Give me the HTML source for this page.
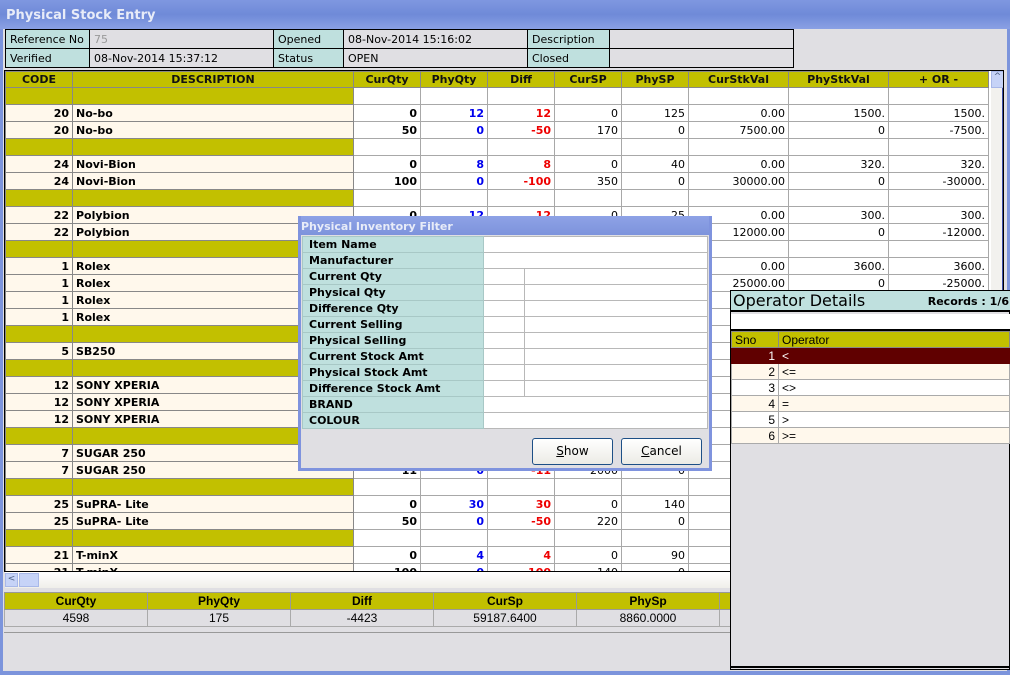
<!DOCTYPE html>
<html><head><meta charset="utf-8"><style>
*{box-sizing:border-box;margin:0;padding:0}
body{width:1010px;height:675px;overflow:hidden;background:#e0dfe3;font-family:"DejaVu Sans","Liberation Sans",sans-serif;font-size:11px;position:relative}
.abs{position:absolute}
#title{left:0;top:0;width:1010px;height:29px;background:linear-gradient(#7f97e0,#6f8ad8 50%,#8aa0e4);color:#e8ecf8;font-weight:bold;font-size:13px;padding:8px 0 0 6px}
#frameL{left:0;top:29px;width:3px;height:646px;background:#7c94dc}
#frameR{right:0;top:29px;width:3px;height:646px;background:#7c94dc}
#frameB{left:0;bottom:0;width:1010px;height:4px;background:#7c94dc}
table{border-collapse:collapse;table-layout:fixed}
#info{left:5px;top:29px;width:788px;border:1px solid #000}
#info td{height:19px;border:1px solid #000;padding:0 4px;font-size:11px;background:#e0dfe3;white-space:nowrap;overflow:hidden}
#info td.l{background:#bfe0de}
#grid{left:4px;top:70px;width:1000px;height:502px;border:1px solid #000;background:#fff;overflow:hidden}
#g{width:983px}
#g td{height:17px;border:1px solid #a8a8a8;padding:0 3px;text-align:right;white-space:nowrap;overflow:hidden;font-size:11px}
#g th{height:16px;border:1px solid #888;background:#c2c000;font-weight:bold;font-size:11px;color:#111}
#g tr.gp td.y{background:#c2c000;border-color:#888}
#g td.c,#g td.d{background:#fff8ec;font-weight:bold;border-color:#888}
#g td.d{text-align:left}
#g td.b{font-weight:bold}
.bl{color:#0000ee}.rd{color:#ee0000}
#vs{left:986px;top:0px;width:13px;height:500px;background:#f2f1ee}
#hs{left:5px;top:572px;width:726px;height:16px;background:linear-gradient(#fff,#f0efea)}
#tot{left:4px;top:592px;width:740px;border:1px solid #000}
#tot td{height:17px;border:1px solid #aaa;text-align:center;font-family:"Liberation Sans Narrow","Liberation Sans",sans-serif;font-size:12px}
#tot tr.h td{background:#c2c000;font-weight:bold;border-color:#999}
#stat{left:4px;top:632px;width:730px;height:36px;border-top:1px solid #999;background:#e0dfe3}
#dlg{left:298px;top:216px;width:414px;height:255px;background:#e0dfe3;border:3px solid #7f93de;border-top:0}
#dt{left:0;top:0;width:408px;height:19px;background:linear-gradient(#8ea2e6,#7d93dc);color:#e8ecf8;font-weight:bold;font-size:11px;padding:4px 0 0 0}
#ft{left:1px;top:20px;width:406px;border:1px solid #000}
#ft td{height:16px;border:1px solid #b8b8b8;background:#fff;font-weight:bold;font-size:11px}
#ft td.l{background:#bfe0de;padding-left:6px;border-color:#a8c8c6}
.btn{top:222px;width:81px;height:27px;border:1px solid #1d4f86;border-radius:3px;background:linear-gradient(#fff,#ecebe5);text-align:center;line-height:25px;font-size:12px}
#op{left:730px;top:290px;width:280px;height:380px;background:#e0dfe3;border:1px solid #000}
#opt{left:0;top:0;width:280px;height:21px;background:#bfe0de;border-bottom:2px solid #000}
#opw{left:0;top:23px;width:280px;height:17px;background:#fff;border-bottom:2px solid #000}
#ot{left:0;top:40px;width:278px}
#ot td{height:16px;border:1px solid #aaa;font-family:"Liberation Sans Narrow","Liberation Sans",sans-serif;font-size:12px;padding:0 3px}
#ot tr.h td{background:#c2c000;border-color:#888}
#ot td.n{text-align:right}
</style></head><body>
<div id="title" class="abs">Physical Stock Entry</div>
<div id="frameL" class="abs"></div><div id="frameR" class="abs"></div>
<table id="info" class="abs">
<colgroup><col style="width:84px"><col style="width:184px"><col style="width:70px"><col style="width:184px"><col style="width:82px"><col style="width:184px"></colgroup>
<tr><td class="l">Reference No</td><td style="color:#999">75</td><td class="l">Opened</td><td>08-Nov-2014 15:16:02</td><td class="l">Description</td><td></td></tr>
<tr><td class="l">Verified</td><td>08-Nov-2014 15:37:12</td><td class="l">Status</td><td>OPEN</td><td class="l">Closed</td><td></td></tr>
</table>
<div id="grid" class="abs">
<table id="g">
<colgroup><col style="width:67px"><col style="width:281px"><col style="width:67px"><col style="width:67px"><col style="width:67px"><col style="width:67px"><col style="width:67px"><col style="width:100px"><col style="width:100px"><col style="width:100px"></colgroup>
<tr><th>CODE</th><th>DESCRIPTION</th><th>CurQty</th><th>PhyQty</th><th>Diff</th><th>CurSP</th><th>PhySP</th><th>CurStkVal</th><th>PhyStkVal</th><th>+ OR -</th></tr>
<tr class="gp"><td class="y"></td><td class="y"></td><td></td><td></td><td></td><td></td><td></td><td></td><td></td><td></td></tr>
<tr><td class="c">20</td><td class="d">No-bo</td><td class="b">0</td><td class="b bl">12</td><td class="b rd">12</td><td>0</td><td>125</td><td>0.00</td><td>1500.</td><td>1500.</td></tr>
<tr><td class="c">20</td><td class="d">No-bo</td><td class="b">50</td><td class="b bl">0</td><td class="b rd">-50</td><td>170</td><td>0</td><td>7500.00</td><td>0</td><td>-7500.</td></tr>
<tr class="gp"><td class="y"></td><td class="y"></td><td></td><td></td><td></td><td></td><td></td><td></td><td></td><td></td></tr>
<tr><td class="c">24</td><td class="d">Novi-Bion</td><td class="b">0</td><td class="b bl">8</td><td class="b rd">8</td><td>0</td><td>40</td><td>0.00</td><td>320.</td><td>320.</td></tr>
<tr><td class="c">24</td><td class="d">Novi-Bion</td><td class="b">100</td><td class="b bl">0</td><td class="b rd">-100</td><td>350</td><td>0</td><td>30000.00</td><td>0</td><td>-30000.</td></tr>
<tr class="gp"><td class="y"></td><td class="y"></td><td></td><td></td><td></td><td></td><td></td><td></td><td></td><td></td></tr>
<tr><td class="c">22</td><td class="d">Polybion</td><td class="b">0</td><td class="b bl">12</td><td class="b rd">12</td><td>0</td><td>25</td><td>0.00</td><td>300.</td><td>300.</td></tr>
<tr><td class="c">22</td><td class="d">Polybion</td><td class="b">40</td><td class="b bl">0</td><td class="b rd">-40</td><td>300</td><td>0</td><td>12000.00</td><td>0</td><td>-12000.</td></tr>
<tr class="gp"><td class="y"></td><td class="y"></td><td></td><td></td><td></td><td></td><td></td><td></td><td></td><td></td></tr>
<tr><td class="c">1</td><td class="d">Rolex</td><td class="b">0</td><td class="b bl">6</td><td class="b rd">6</td><td>0</td><td>600</td><td>0.00</td><td>3600.</td><td>3600.</td></tr>
<tr><td class="c">1</td><td class="d">Rolex</td><td class="b">50</td><td class="b bl">0</td><td class="b rd">-50</td><td>500</td><td>0</td><td>25000.00</td><td>0</td><td>-25000.</td></tr>
<tr><td class="c">1</td><td class="d">Rolex</td><td class="b">20</td><td class="b bl">0</td><td class="b rd">-20</td><td>800</td><td>0</td><td>16000.00</td><td>0</td><td>-16000.</td></tr>
<tr><td class="c">1</td><td class="d">Rolex</td><td class="b">22</td><td class="b bl">0</td><td class="b rd">-22</td><td>700</td><td>0</td><td>15400.00</td><td>0</td><td>-15400.</td></tr>
<tr class="gp"><td class="y"></td><td class="y"></td><td></td><td></td><td></td><td></td><td></td><td></td><td></td><td></td></tr>
<tr><td class="c">5</td><td class="d">SB250</td><td class="b">0</td><td class="b bl">0</td><td class="b rd">0</td><td>0</td><td>0</td><td>0.00</td><td>0</td><td>0</td></tr>
<tr class="gp"><td class="y"></td><td class="y"></td><td></td><td></td><td></td><td></td><td></td><td></td><td></td><td></td></tr>
<tr><td class="c">12</td><td class="d">SONY XPERIA</td><td class="b">0</td><td class="b bl">0</td><td class="b rd">0</td><td>0</td><td>0</td><td>0.00</td><td>0</td><td>0</td></tr>
<tr><td class="c">12</td><td class="d">SONY XPERIA</td><td class="b">0</td><td class="b bl">0</td><td class="b rd">0</td><td>0</td><td>0</td><td>6000.00</td><td>0</td><td>-6000.</td></tr>
<tr><td class="c">12</td><td class="d">SONY XPERIA</td><td class="b">0</td><td class="b bl">0</td><td class="b rd">0</td><td>0</td><td>0</td><td>11800.00</td><td>0</td><td>-11800.</td></tr>
<tr class="gp"><td class="y"></td><td class="y"></td><td></td><td></td><td></td><td></td><td></td><td></td><td></td><td></td></tr>
<tr><td class="c">7</td><td class="d">SUGAR 250</td><td class="b">0</td><td class="b bl">0</td><td class="b rd">0</td><td>0</td><td>0</td><td>0.00</td><td>0</td><td>0</td></tr>
<tr><td class="c">7</td><td class="d">SUGAR 250</td><td class="b">11</td><td class="b bl">0</td><td class="b rd">-11</td><td>2000</td><td>0</td><td>22000.00</td><td>0</td><td>-22000.</td></tr>
<tr class="gp"><td class="y"></td><td class="y"></td><td></td><td></td><td></td><td></td><td></td><td></td><td></td><td></td></tr>
<tr><td class="c">25</td><td class="d">SuPRA- Lite</td><td class="b">0</td><td class="b bl">30</td><td class="b rd">30</td><td>0</td><td>140</td><td>0.00</td><td>4200.</td><td>4200.</td></tr>
<tr><td class="c">25</td><td class="d">SuPRA- Lite</td><td class="b">50</td><td class="b bl">0</td><td class="b rd">-50</td><td>220</td><td>0</td><td>11000.00</td><td>0</td><td>-11000.</td></tr>
<tr class="gp"><td class="y"></td><td class="y"></td><td></td><td></td><td></td><td></td><td></td><td></td><td></td><td></td></tr>
<tr><td class="c">21</td><td class="d">T-minX</td><td class="b">0</td><td class="b bl">4</td><td class="b rd">4</td><td>0</td><td>90</td><td>0.00</td><td>360.</td><td>360.</td></tr>
<tr><td class="c">21</td><td class="d">T-minX</td><td class="b">100</td><td class="b bl">0</td><td class="b rd">-100</td><td>140</td><td>0</td><td>14000.00</td><td>0</td><td>-14000.</td></tr>
</table>
<div id="vs" class="abs"><div class="abs" style="left:0;top:0;width:13px;height:17px;background:#c6d3f7;border:1px solid #a8b8e8;font-size:9px;text-align:center;color:#4d6185">&#94;</div><div class="abs" style="left:11px;top:17px;width:2px;height:483px;background:#3b4fa8"></div></div>
</div>
<div id="hs" class="abs"><div class="abs" style="left:0;top:1px;width:13px;height:14px;background:#c6d3f7;border:1px solid #a8b8e8;font-size:9px;color:#4d6185;text-align:center">&lt;</div><div class="abs" style="left:14px;top:1px;width:20px;height:14px;background:#c6d3f7;border:1px solid #a8b8e8"></div></div>
<table id="tot" class="abs">
<colgroup><col style="width:143px"><col style="width:143px"><col style="width:143px"><col style="width:143px"><col style="width:143px"><col style="width:25px"></colgroup>
<tr class="h"><td>CurQty</td><td>PhyQty</td><td>Diff</td><td>CurSp</td><td>PhySp</td><td></td></tr>
<tr><td>4598</td><td>175</td><td>-4423</td><td>59187.6400</td><td>8860.0000</td><td></td></tr>
</table>
<div id="stat" class="abs"></div>
<div id="frameB" class="abs"></div>
<div id="dlg" class="abs">
<div id="dt" class="abs">Physical Inventory Filter</div>
<table id="ft" class="abs">
<colgroup><col style="width:181px"><col style="width:40px"><col style="width:183px"></colgroup>
<tr><td class="l">Item Name</td><td colspan="2"></td></tr>
<tr><td class="l">Manufacturer</td><td colspan="2"></td></tr>
<tr><td class="l">Current Qty</td><td></td><td></td></tr>
<tr><td class="l">Physical Qty</td><td></td><td></td></tr>
<tr><td class="l">Difference Qty</td><td></td><td></td></tr>
<tr><td class="l">Current Selling</td><td></td><td></td></tr>
<tr><td class="l">Physical Selling</td><td></td><td></td></tr>
<tr><td class="l">Current Stock Amt</td><td></td><td></td></tr>
<tr><td class="l">Physical Stock Amt</td><td></td><td></td></tr>
<tr><td class="l">Difference Stock Amt</td><td></td><td></td></tr>
<tr><td class="l">BRAND</td><td colspan="2"></td></tr>
<tr><td class="l">COLOUR</td><td colspan="2"></td></tr>
</table>
<div class="abs btn" style="left:231px"><u>S</u>how</div>
<div class="abs btn" style="left:320px"><u>C</u>ancel</div>
</div>
<div id="op" class="abs">
<div id="opt" class="abs"><span class="abs" style="left:2px;top:0px;font-size:16px;font-family:'DejaVu Sans',sans-serif">Operator Details</span><span class="abs" style="right:2px;top:4px;font-weight:bold;font-size:11px">Records : 1/6</span></div>
<div id="opw" class="abs"></div>
<table id="ot" class="abs">
<colgroup><col style="width:47px"><col style="width:231px"></colgroup>
<tr class="h"><td>Sno</td><td>Operator</td></tr>
<tr style="background:#600000;color:#fff"><td class="n" style="border-color:#600000">1</td><td style="border-color:#600000">&lt;</td></tr>
<tr style="background:#fff8ec"><td class="n">2</td><td>&lt;=</td></tr>
<tr style="background:#fff"><td class="n">3</td><td>&lt;&gt;</td></tr>
<tr style="background:#fff8ec"><td class="n">4</td><td>=</td></tr>
<tr style="background:#fff"><td class="n">5</td><td>&gt;</td></tr>
<tr style="background:#fff8ec"><td class="n">6</td><td>&gt;=</td></tr>
</table>
<div class="abs" style="left:0;top:375px;width:280px;height:2px;background:#000"></div>
</div>
</body></html>
